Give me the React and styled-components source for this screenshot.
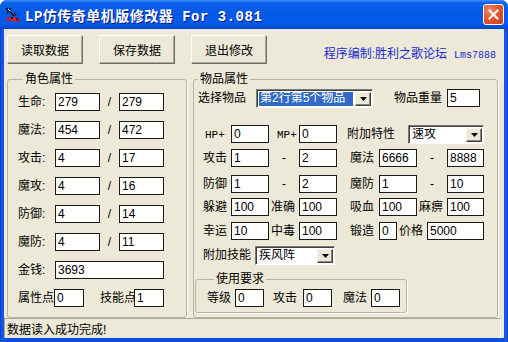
import React from 'react';
import styled, { createGlobalStyle } from 'styled-components';

const Global = createGlobalStyle`
  html, body { margin: 0; padding: 0; background: #ffffff; }
  body { width: 508px; height: 342px; overflow: hidden; font-family: "Liberation Sans", "Noto Sans CJK SC", sans-serif; }
  * { box-sizing: border-box; }
`;

const Window = styled.div`
  width: 508px;
  height: 342px;
  display: flex;
  flex-direction: column;
  border-radius: 7px 7px 0 0;
  overflow: hidden;
  background: linear-gradient(to right, #0a32c8 0, #1660ea 2px, #0b4fdc 4px, #0b4fdc 504px, #1660ea 506px, #0a32c8 508px);
`;

const TitleBar = styled.div`
  height: 29px;
  flex: none;
  display: flex;
  align-items: center;
  padding: 0 4px 0 5px;
  background: linear-gradient(to bottom, #3d8ff8 0%, #0c61ea 10%, #0458e6 45%, #0559e8 80%, #0a4fd8 92%, #0842c8 100%);
`;

const IconBox = styled.div`
  width: 16px;
  height: 16px;
  flex: none;
  display: flex;
`;

const Title = styled.div`
  margin-left: 4px;
  color: #ffffff;
  font-family: "Liberation Mono", "Noto Sans CJK SC", monospace;
  font-weight: bold;
  font-size: 14px;
  letter-spacing: 0.5px;
  white-space: nowrap;
  text-shadow: 1px 1px 0 #0a1a8a;
  flex: 1;
`;

const CloseBtn = styled.div`
  width: 21px;
  height: 21px;
  flex: none;
  border: 1px solid #ffffff;
  border-radius: 3px;
  background: radial-gradient(circle at 30% 30%, #f08a6a 0%, #e2582f 45%, #c8401e 100%);
  display: flex;
  align-items: center;
  justify-content: center;
`;

const Client = styled.div`
  flex: 1;
  margin: 0 4px 4px;
  background: #ece9d8;
  display: flex;
  flex-direction: column;
`;

const TopRow = styled.div`
  display: flex;
  align-items: flex-end;
  padding: 6px 8px 0 3px;
  gap: 16px;
  flex: none;
`;

const Button = styled.div`
  width: 76px;
  height: 29px;
  display: flex;
  align-items: center;
  justify-content: center;
  font-size: 12px;
  color: #000;
  background: #ece9d8;
  border: 1px solid;
  border-color: #ffffff #716f64 #716f64 #ffffff;
  box-shadow: inset -1px -1px 0 #aca899;
`;

const Credit = styled.div`
  margin-left: auto;
  margin-bottom: 1px;
  color: #1a2ad2;
  font-size: 12px;
  line-height: 14px;
  white-space: nowrap;
  display: flex;
  align-items: baseline;
`;

const Mono = styled.span`
  font-family: "Liberation Mono", monospace;
  font-size: ${p => p.$size || 10}px;
  margin-left: ${p => p.$ml || 0}px;
  font-weight: ${p => (p.$bold ? 'bold' : 'normal')};
`;

const Main = styled.div`
  display: flex;
  gap: 6px;
  margin-top: 8px;
  padding-left: 3px;
  height: 246px;
  flex: none;
`;

const Group = styled.fieldset`
  margin: 0;
  margin-left: ${p => p.$ml || 0}px;
  margin-top: ${p => p.$mt || 0}px;
  padding: ${p => p.$pad || '0'};
  width: ${p => p.$w}px;
  height: ${p => p.$h}px;
  min-width: 0;
  border: 1px solid #b7b4a6;
  border-radius: 3px;
  box-shadow: 1px 1px 0 #ffffff;
  display: flex;
  flex-direction: column;
  flex: none;
`;

const Legend = styled.legend`
  margin-left: ${p => p.$ml}px;
  padding: 0 2px;
  font-size: 12px;
  line-height: 14px;
  color: #000;
`;

const Row = styled.div`
  display: flex;
  align-items: center;
  height: 18px;
  margin-top: ${p => p.$mt || 0}px;
  margin-left: ${p => p.$ml || 0}px;
  flex: none;
`;

const Label = styled.div`
  width: ${p => p.$w}px;
  padding-left: ${p => p.$pl || 0}px;
  text-align: ${p => p.$align || 'left'};
  font-size: 12px;
  line-height: 14px;
  color: #000;
  white-space: nowrap;
  flex: none;
`;

const Field = styled.input`
  width: ${p => p.$w}px;
  height: 18px;
  flex: none;
  margin: 0;
  padding: 0 2px;
  border: 1px solid #1a1a1a;
  border-radius: 0;
  background: #ffffff;
  font-family: "Liberation Sans", sans-serif;
  font-size: 12px;
  color: #000;
  outline: none;
`;

const Combo = styled.div`
  width: ${p => p.$w}px;
  height: 19px;
  flex: none;
  display: flex;
  padding: 2px 1px 1px 2px;
  background: #ffffff;
  border: 1px solid;
  border-color: #7a7a7a #ffffff #ffffff #7a7a7a;
  box-shadow: inset 1px 1px 0 #404040;
`;

const ComboText = styled.div`
  flex: 1;
  display: flex;
  align-items: center;
  padding-left: 1px;
  margin-right: 2px;
  font-size: 12px;
  line-height: 13px;
  white-space: nowrap;
  overflow: hidden;
  background: ${p => (p.$sel ? '#316ac5' : 'transparent')};
  color: ${p => (p.$sel ? '#ffffff' : '#000000')};
`;

const ComboBtn = styled.div`
  width: 16px;
  flex: none;
  background: #ece9d8;
  border: 1px solid;
  border-color: #f4f3ee #404040 #404040 #f4f3ee;
  box-shadow: inset -1px -1px 0 #8a887c;
  display: flex;
  align-items: center;
  justify-content: center;
`;

const StatusBar = styled.div`
  flex: 1;
  display: flex;
  align-items: center;
  padding-left: 2px;
  border-top: 1px solid #aca899;
  border-left: 1px solid #aca899;
  border-right: 1px solid #ffffff;
  font-size: 12px;
  color: #000;
  margin-right: 3px;
`;

const Arrow = () => (
  <svg width="7" height="4" viewBox="0 0 7 4">
    <path d="M0 0 H7 L3.5 4 Z" fill="#000" />
  </svg>
);

const Select = ({ w, text, sel }) => (
  <Combo $w={w}>
    <ComboText $sel={sel}>{text}</ComboText>
    <ComboBtn>
      <Arrow />
    </ComboBtn>
  </Combo>
);

const AppIcon = () => (
  <IconBox>
    <svg width="16" height="16" viewBox="0 0 16 16">
      <path d="M1 1 L9 9" stroke="#111" strokeWidth="1.6" />
      <path d="M6 1 L2 6" stroke="#111" strokeWidth="1.3" />
      <path d="M3 2 L5 4" stroke="#fff" strokeWidth="1" />
      <path d="M8 4 L12 8 L10 9 Z" fill="#222" />
      <circle cx="4" cy="12" r="2.2" fill="#d01818" />
      <circle cx="9" cy="12.5" r="2.4" fill="#e02020" />
      <circle cx="13.5" cy="13" r="1.8" fill="#c01010" />
      <rect x="6" y="10" width="2" height="2" fill="#111" />
      <rect x="11" y="11" width="1.5" height="1.5" fill="#111" />
    </svg>
  </IconBox>
);

const leftRows = [
  ['生命', '279', '279'],
  ['魔法', '454', '472'],
  ['攻击', '4', '17'],
  ['魔攻', '4', '16'],
  ['防御', '4', '14'],
  ['魔防', '4', '11'],
];

export default function App() {
  return (
    <>
      <Global />
      <Window>
        <TitleBar>
          <AppIcon />
          <Title>LP仿传奇单机版修改器 For 3.081</Title>
          <CloseBtn>
            <svg width="11" height="11" viewBox="0 0 11 11">
              <path d="M1.5 1.5 L9.5 9.5 M9.5 1.5 L1.5 9.5" stroke="#fff" strokeWidth="2" strokeLinecap="square" />
            </svg>
          </CloseBtn>
        </TitleBar>
        <Client>
          <TopRow>
            <Button>读取数据</Button>
            <Button>保存数据</Button>
            <Button>退出修改</Button>
            <Credit>
              程序编制:胜利之歌论坛<Mono $ml={7}>Lms7888</Mono>
            </Credit>
          </TopRow>
          <Main>
            <Group $w={180} $h={246} $pad="7px 0 0 10px">
              <Legend $ml={5}>角色属性</Legend>
              {leftRows.map(([name, a, b], i) => (
                <Row key={name} $mt={i === 0 ? 0 : 10}>
                  <Label $w={37}>{name}:</Label>
                  <Field $w={45} readOnly value={a} />
                  <Label $w={19} $align="center">/</Label>
                  <Field $w={45} readOnly value={b} />
                </Row>
              ))}
              <Row $mt={10}>
                <Label $w={37}>金钱:</Label>
                <Field $w={109} readOnly value="3693" />
              </Row>
              <Row $mt={10}>
                <Label $w={36}>属性点</Label>
                <Field $w={30} readOnly value="0" />
                <Label $w={50} $pl={16}>技能点</Label>
                <Field $w={30} readOnly value="1" />
              </Row>
            </Group>
            <Group $w={305} $h={246} $pad="3px 0 0 0">
              <Legend $ml={4}>物品属性</Legend>
              <Row $ml={4}>
                <Label $w={58}>选择物品</Label>
                <Select w={117} text="第2行第5个物品" sel />
                <Label $w={74} $pl={21}>物品重量</Label>
                <Field $w={33} readOnly value="5" />
              </Row>
              <Row $ml={9} $mt={18}>
                <Label $w={28} $pl={2}><Mono $size={11}>HP+</Mono></Label>
                <Field $w={38} readOnly value="0" />
                <Label $w={30} $pl={8}><Mono $size={11}>MP+</Mono></Label>
                <Field $w={38} readOnly value="0" />
                <Label $w={71} $pl={10}>附加特性</Label>
                <Select w={76} text="速攻" />
              </Row>
              <Row $ml={9} $mt={6}>
                <Label $w={28}>攻击</Label>
                <Field $w={38} readOnly value="1" />
                <Label $w={30} $align="center">-</Label>
                <Field $w={38} readOnly value="2" />
                <Label $w={42} $pl={13}>魔法</Label>
                <Field $w={38} readOnly value="6666" />
                <Label $w={30} $align="center">-</Label>
                <Field $w={37} readOnly value="8888" />
              </Row>
              <Row $ml={9} $mt={8}>
                <Label $w={28}>防御</Label>
                <Field $w={38} readOnly value="1" />
                <Label $w={30} $align="center">-</Label>
                <Field $w={38} readOnly value="2" />
                <Label $w={42} $pl={13}>魔防</Label>
                <Field $w={38} readOnly value="1" />
                <Label $w={30} $align="center">-</Label>
                <Field $w={37} readOnly value="10" />
              </Row>
              <Row $ml={9} $mt={5}>
                <Label $w={28}>躲避</Label>
                <Field $w={38} readOnly value="100" />
                <Label $w={30} $pl={2}>准确</Label>
                <Field $w={38} readOnly value="100" />
                <Label $w={42} $pl={13}>吸血</Label>
                <Field $w={38} readOnly value="100" />
                <Label $w={30} $pl={2}>麻痹</Label>
                <Field $w={37} readOnly value="100" />
              </Row>
              <Row $ml={9} $mt={6}>
                <Label $w={28}>幸运</Label>
                <Field $w={38} readOnly value="10" />
                <Label $w={30} $pl={2}>中毒</Label>
                <Field $w={38} readOnly value="100" />
                <Label $w={42} $pl={13}>锻造</Label>
                <Field $w={18} readOnly value="0" />
                <Label $w={30} $pl={2}>价格</Label>
                <Field $w={57} readOnly value="5000" />
              </Row>
              <Row $ml={9} $mt={6}>
                <Label $w={52}>附加技能</Label>
                <Select w={80} text="疾风阵" />
              </Row>
              <Group $w={212} $h={41} $mt={8} $ml={1} $pad="3px 0 0 11px">
                <Legend $ml={7}>使用要求</Legend>
                <Row>
                  <Label $w={28}>等级</Label>
                  <Field $w={29} readOnly value="0" />
                  <Label $w={39} $pl={9}>攻击</Label>
                  <Field $w={29} readOnly value="0" />
                  <Label $w={39} $pl={11}>魔法</Label>
                  <Field $w={29} readOnly value="0" />
                </Row>
              </Group>
            </Group>
          </Main>
          <StatusBar>数据读入成功完成!</StatusBar>
        </Client>
      </Window>
    </>
  );
}
